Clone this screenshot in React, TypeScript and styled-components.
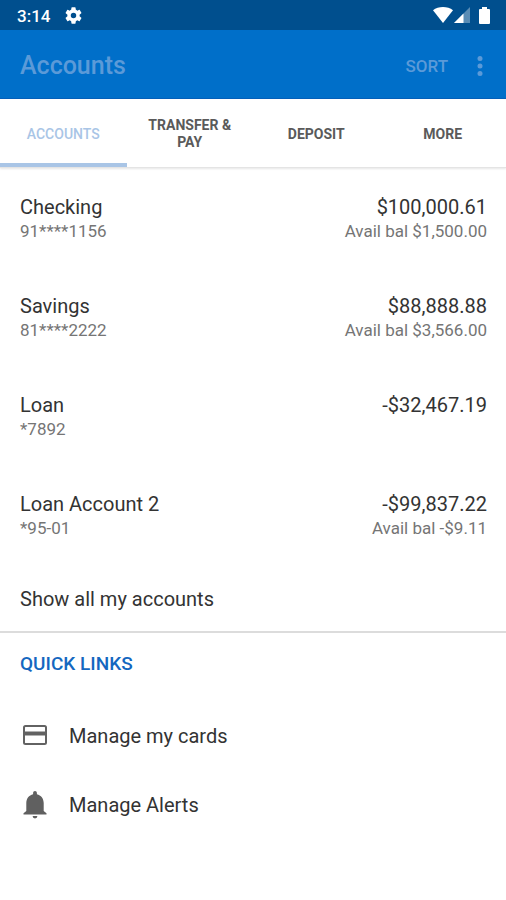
import React from "react";
import styled, { createGlobalStyle } from "styled-components";

const GlobalStyle = createGlobalStyle`
  *, *::before, *::after { box-sizing: border-box; }
  body {
    margin: 0;
    background: #ffffff;
    color: #333333;
    font-family: Roboto, "Liberation Sans", sans-serif;
  }
  button {
    border: 0;
    padding: 0;
    background: none;
    color: inherit;
    font: inherit;
    cursor: pointer;
  }
`;

const Screen = styled.div`
  min-height: 100vh;
  background: #ffffff;
`;

const StatusBar = styled.div`
  display: flex;
  align-items: center;
  justify-content: space-between;
  height: 30px;
  padding: 0 16px 0 17px;
  background: #004f8e;
  color: #ffffff;
`;

const StatusGroup = styled.div<{ $gap: number }>`
  display: flex;
  align-items: center;
  gap: ${({ $gap }) => $gap}px;
`;

const Clock = styled.time`
  font-size: 17px;
  line-height: 20px;
  font-weight: 500;
  padding-top: 2px;
`;

const AppBar = styled.header`
  display: flex;
  align-items: center;
  height: 69px;
  padding: 3px 16px 0 20px;
  background: #006fc9;
  border-bottom: 1px solid #0560ba;
  color: #5b9ad8;
`;

const Title = styled.h1`
  flex: 1;
  margin: 0;
  font-size: 25px;
  line-height: 32px;
  font-weight: 500;
`;

const SortButton = styled.button`
  font-size: 17px;
  line-height: 24px;
  font-weight: 500;
`;

const MenuButton = styled.button`
  display: flex;
  justify-content: center;
  width: 20px;
  margin-left: 22px;
`;

const TabBar = styled.nav`
  display: grid;
  grid-template-columns: repeat(4, 1fr);
  height: 69px;
  border-bottom: 1px solid #e4e4e4;
  box-shadow: 0 1px 2px rgba(0, 0, 0, 0.1);
`;

const Tab = styled.button<{ $active: boolean }>`
  padding: 6px 16px 0;
  border-bottom: 4px solid ${({ $active }) => ($active ? "#a9c5e6" : "transparent")};
  color: ${({ $active }) => ($active ? "#a9c5e6" : "#5a5a5a")};
  font-size: 14px;
  line-height: 17px;
  font-weight: ${({ $active }) => ($active ? 500 : 700)};
  text-transform: uppercase;
`;

const AccountList = styled.ul`
  margin: 0;
  padding: 2px 0 0;
  list-style: none;
`;

const AccountRow = styled.button`
  display: flex;
  justify-content: space-between;
  width: 100%;
  height: 99px;
  padding: 24px 19px 0 20px;
  text-align: left;
`;

const Column = styled.span<{ $align: "left" | "right" }>`
  display: flex;
  flex-direction: column;
  text-align: ${({ $align }) => $align};
`;

const Primary = styled.span`
  font-size: 20px;
  line-height: 26px;
`;

const Secondary = styled.span`
  color: #757575;
  font-size: 17px;
  line-height: 23px;
`;

const ShowAll = styled.button`
  display: block;
  width: 100%;
  height: 67px;
  padding: 0 20px;
  border-bottom: 2px solid #dcdcdc;
  font-size: 20px;
  line-height: 26px;
  text-align: left;
`;

const SectionTitle = styled.h2`
  margin: 0;
  padding: 19px 20px 25px;
  color: #1467c0;
  font-size: 19px;
  line-height: 24px;
  font-weight: 500;
`;

const QuickLink = styled.button`
  display: flex;
  align-items: center;
  gap: 19px;
  width: 100%;
  height: 69px;
  padding: 0 20px;
  font-size: 20px;
  line-height: 26px;
  text-align: left;
`;

const GearIcon = () => (
  <svg width="17" height="17" viewBox="2 2 20 20" fill="currentColor" aria-hidden="true">
    <path d="M19.14 12.94c.04-.3.06-.61.06-.94s-.02-.64-.07-.94l2.03-1.58a.49.49 0 0 0 .12-.61l-1.92-3.32a.49.49 0 0 0-.59-.22l-2.39.96c-.5-.38-1.03-.7-1.62-.94l-.36-2.54a.48.48 0 0 0-.48-.41h-3.84a.47.47 0 0 0-.47.41l-.36 2.54c-.59.24-1.13.57-1.62.94l-2.39-.96a.48.48 0 0 0-.59.22L2.74 8.87c-.12.21-.08.47.12.61l2.03 1.58c-.05.3-.09.63-.09.94s.02.64.07.94l-2.03 1.58a.49.49 0 0 0-.12.61l1.92 3.32c.12.22.37.29.59.22l2.39-.96c.5.38 1.03.7 1.62.94l.36 2.54c.05.24.24.41.48.41h3.84c.24 0 .44-.17.47-.41l.36-2.54c.59-.24 1.13-.56 1.62-.94l2.39.96c.22.08.47 0 .59-.22l1.92-3.32a.48.48 0 0 0-.12-.61zM12 15.2A3.200 3.200 0 1 1 12 8.800a3.200 3.200 0 0 1 0 6.400z" />
  </svg>
);

const WifiIcon = () => (
  <svg width="20" height="16" viewBox="0 0 20 16" fill="currentColor" aria-hidden="true">
    <path d="M0 3.200C2.800 1.100 6.200 0 10 0s7.200 1.100 10 3.200L10 16z" />
  </svg>
);

const SignalIcon = () => (
  <svg width="16" height="16" viewBox="0 0 16 16" fill="currentColor" aria-hidden="true">
    <path d="M0 16 16 0v16z" opacity=".35" />
    <path d="M0 16 9.500 6.500V16z" />
  </svg>
);

const BatteryIcon = () => (
  <svg width="11" height="17" viewBox="0 0 11 17" fill="currentColor" aria-hidden="true">
    <path d="M3 0h5v2h2a1 1 0 0 1 1 1v13a1 1 0 0 1-1 1H1a1 1 0 0 1-1-1V3a1 1 0 0 1 1-1h2z" />
  </svg>
);

const MoreIcon = () => (
  <svg width="6" height="20" viewBox="0 0 6 20" fill="currentColor" aria-hidden="true">
    <circle cx="3" cy="2.500" r="2.500" />
    <circle cx="3" cy="10" r="2.500" />
    <circle cx="3" cy="17.500" r="2.500" />
  </svg>
);

const CardIcon = () => (
  <svg width="30" height="30" viewBox="0 0 30 30" fill="none" stroke="#626262" aria-hidden="true">
    <rect x="4" y="5" width="22" height="18" rx="1.500" strokeWidth="2" />
    <path d="M4 12.500h22" strokeWidth="4" />
  </svg>
);

const BellIcon = () => (
  <svg width="30" height="30" viewBox="0 0 30 30" fill="#606060" aria-hidden="true">
    <path d="M15 1c1.100 0 1.900.9 1.900 2v1.200c4.200 1 6.800 4.300 6.800 8.800v8l2.800 2.200v1.300h-23v-1.300L6.300 21v-8c0-4.500 2.600-7.800 6.800-8.800V3c0-1.100.8-2 1.900-2z" />
    <path d="M12.600 26h4.800a2.400 2.400 0 0 1-4.800 0z" />
  </svg>
);

const tabs = ["Accounts", "Transfer & Pay", "Deposit", "More"];

const accounts = [
  { name: "Checking", number: "91****1156", balance: "$100,000.61", available: "Avail bal $1,500.00" },
  { name: "Savings", number: "81****2222", balance: "$88,888.88", available: "Avail bal $3,566.00" },
  { name: "Loan", number: "*7892", balance: "-$32,467.19" },
  { name: "Loan Account 2", number: "*95-01", balance: "-$99,837.22", available: "Avail bal -$9.11" },
];

export default function App() {
  return (
    <Screen>
      <GlobalStyle />
      <StatusBar>
        <StatusGroup $gap={15}>
          <Clock>3:14</Clock>
          <GearIcon />
        </StatusGroup>
        <StatusGroup $gap={1}>
          <WifiIcon />
          <StatusGroup $gap={9}>
            <SignalIcon />
            <BatteryIcon />
          </StatusGroup>
        </StatusGroup>
      </StatusBar>
      <AppBar>
        <Title>Accounts</Title>
        <SortButton type="button">SORT</SortButton>
        <MenuButton type="button" aria-label="More options">
          <MoreIcon />
        </MenuButton>
      </AppBar>
      <TabBar>
        {tabs.map((tab, index) => (
          <Tab key={tab} type="button" $active={index === 0}>
            {tab}
          </Tab>
        ))}
      </TabBar>
      <main>
        <AccountList>
          {accounts.map((account) => (
            <li key={account.name}>
              <AccountRow type="button">
                <Column $align="left">
                  <Primary>{account.name}</Primary>
                  <Secondary>{account.number}</Secondary>
                </Column>
                <Column $align="right">
                  <Primary>{account.balance}</Primary>
                  {account.available && <Secondary>{account.available}</Secondary>}
                </Column>
              </AccountRow>
            </li>
          ))}
        </AccountList>
        <ShowAll type="button">Show all my accounts</ShowAll>
        <section>
          <SectionTitle>QUICK LINKS</SectionTitle>
          <QuickLink type="button">
            <CardIcon />
            Manage my cards
          </QuickLink>
          <QuickLink type="button">
            <BellIcon />
            Manage Alerts
          </QuickLink>
        </section>
      </main>
    </Screen>
  );
}
